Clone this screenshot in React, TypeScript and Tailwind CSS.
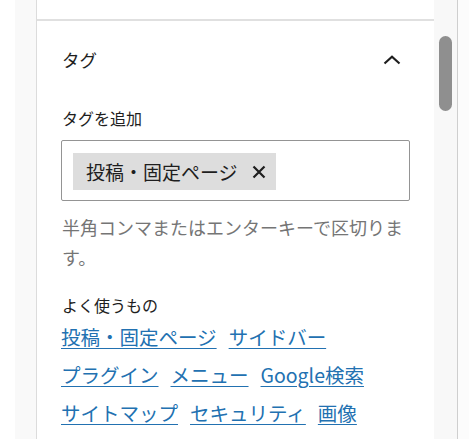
import { useState } from 'react'

const links = [
  '投稿・固定ページ',
  'サイドバー',
  'プラグイン',
  'メニュー',
  'Google検索',
  'サイトマップ',
  'セキュリティ',
  '画像',
]

export default function App() {
  const [tags, setTags] = useState<string[]>(['投稿・固定ページ'])

  return (
    <div
      className="flex w-[469px] h-[439px] overflow-hidden bg-white text-[#1e1e1e]"
      style={{ fontFamily: '"Noto Sans CJK JP", "Noto Sans", sans-serif' }}
    >
      <div className="w-[15px] shrink-0" />
      <div className="w-[21px] shrink-0 bg-[#f9f9f9]" />
      <div className="w-px shrink-0 bg-[#dcdcdc]" />

      {/* settings panel */}
      <div className="w-[397px] shrink-0 flex flex-col">
        <div className="h-[19px] shrink-0" />
        <div className="h-[2px] shrink-0 bg-[#e0e0e0]" />

        <div className="px-[24px]">
          <div className="flex items-center justify-between pt-[27px] pr-[9px]">
            <h2 className="text-[17.5px] leading-[24px] pl-px">タグ</h2>
            <svg width="18" height="10" viewBox="0 0 18 10" fill="none">
              <path d="M1.5 8.5 L9 1.8 L16.5 8.5" stroke="#1e1e1e" strokeWidth="2.2" />
            </svg>
          </div>

          <div className="mt-[35px] text-[16px] leading-[22px] pl-px">タグを追加</div>

          <div className="mt-[11px] h-[61px] border border-[#949494] rounded-[2px] pt-[12px] pl-[11px] flex items-start">
            {tags.map((t) => (
              <span
                key={t}
                className="h-[37px] flex items-center bg-[#dddddd] pl-[13px] pr-[10px] gap-[14px] text-[19px] leading-[37px]"
              >
                {t}
                <button onClick={() => setTags(tags.filter((x) => x !== t))}>
                  <svg width="14" height="14" viewBox="0 0 14 14">
                    <path d="M1.5 1.5 L12.5 12.5 M12.5 1.5 L1.5 12.5" stroke="#1e1e1e" strokeWidth="2.2" />
                  </svg>
                </button>
              </span>
            ))}
          </div>

          <p className="mt-[11px] text-[18px] leading-[30px] text-[#757575] pl-px">
            半角コンマまたはエンターキーで区切ります。
          </p>

          <div className="mt-[22px] text-[16px] leading-[22px] pl-px">よく使うもの</div>

          <div className="mt-[2px] flex flex-wrap gap-x-[12px]">
            {links.map((l) => (
              <a
                key={l}
                href="#"
                className="text-[19.5px] leading-[38px] text-[#2271b1] underline underline-offset-[3px]"
              >
                {l}
              </a>
            ))}
          </div>
        </div>
      </div>

      {/* scrollbar */}
      <div className="w-[23px] shrink-0 bg-[#f8f8f8] pt-[36px] pl-[5px]">
        <div className="w-[13px] h-[75px] rounded-full bg-[#8f8f8f]" />
      </div>
      <div className="w-px shrink-0 bg-[#cfcfcf]" />
      <div className="flex-1 bg-[#fcfcfc]" />
    </div>
  )
}
